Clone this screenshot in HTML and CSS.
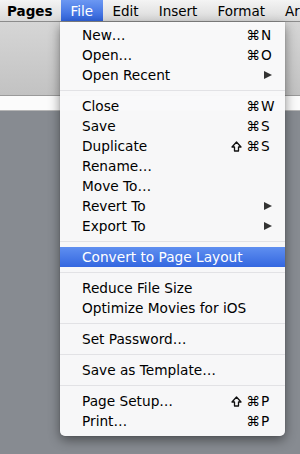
FILE: index.html
```html
<!DOCTYPE html>
<html>
<head>
    <title>Pages - File menu</title>
    <link rel="stylesheet" href="styles.css">
</head>
<body>
    <div class="menubar">
        <span class="app">Pages</span>
        <span class="active">File</span>
        <span>Edit</span>
        <span>Insert</span>
        <span>Format</span>
        <span>Arrange</span>
    </div>
    <div class="toolbar"></div>
    <div class="ruler"></div>
    <div class="canvas"></div>

    <div class="menu">
        <div class="item"><span>New…</span><span class="keys"><span class="mods">⌘</span><span class="key">N</span></span></div>
        <div class="item"><span>Open…</span><span class="keys"><span class="mods">⌘</span><span class="key">O</span></span></div>
        <div class="item"><span>Open Recent</span><span class="arrow"></span></div>
        <div class="sep"></div>
        <div class="item"><span>Close</span><span class="keys"><span class="mods">⌘</span><span class="key">W</span></span></div>
        <div class="item"><span>Save</span><span class="keys"><span class="mods">⌘</span><span class="key">S</span></span></div>
        <div class="item"><span>Duplicate</span><span class="keys"><span class="mods"><svg class="shift" width="11" height="11" viewBox="0 0 11 11"><path d="M5.5 1 L10 6 H7.5 V10 H3.5 V6 H1 Z"/></svg>⌘</span><span class="key">S</span></span></div>
        <div class="item"><span>Rename…</span></div>
        <div class="item"><span>Move To…</span></div>
        <div class="item"><span>Revert To</span><span class="arrow"></span></div>
        <div class="item"><span>Export To</span><span class="arrow"></span></div>
        <div class="sep"></div>
        <div class="item selected"><span>Convert to Page Layout</span></div>
        <div class="sep"></div>
        <div class="item"><span>Reduce File Size</span></div>
        <div class="item"><span>Optimize Movies for iOS</span></div>
        <div class="sep"></div>
        <div class="item"><span>Set Password…</span></div>
        <div class="sep"></div>
        <div class="item"><span>Save as Template…</span></div>
        <div class="sep"></div>
        <div class="item"><span>Page Setup…</span><span class="keys"><span class="mods"><svg class="shift" width="11" height="11" viewBox="0 0 11 11"><path d="M5.5 1 L10 6 H7.5 V10 H3.5 V6 H1 Z"/></svg>⌘</span><span class="key">P</span></span></div>
        <div class="item"><span>Print…</span><span class="keys"><span class="mods">⌘</span><span class="key">P</span></span></div>
    </div>
</body>
</html>
```

FILE: styles.css
```css
body {
    margin: 0;
    width: 300px;
    height: 454px;
    overflow: hidden;
    display: flex;
    flex-direction: column;
    font-family: "DejaVu Sans", "Liberation Sans", sans-serif;
    background-color: #878b91;
    position: relative;
}
.menubar {
    height: 21px;
    display: flex;
    align-items: stretch;
    white-space: nowrap;
    overflow: hidden;
    font-size: 13.5px;
    color: #000;
    background: linear-gradient(#f4f4f4, #d9d9d9);
    border-bottom: 1px solid #8c8c8c;
    flex-shrink: 0;
}
.menubar span {
    display: flex;
    align-items: center;
    padding: 0 10px;
}
.menubar .app {
    font-weight: bold;
    padding-left: 7px;
    padding-right: 8px;
}
.menubar .active {
    color: white;
    background: linear-gradient(#6c98f2, #2f62db);
    width: 42px;
    box-sizing: border-box;
}
.toolbar {
    height: 73px;
    background: linear-gradient(#d6d6d6, #c2c2c2);
    border-bottom: 1px solid #9a9a9a;
    flex-shrink: 0;
}
.ruler {
    height: 14px;
    background-color: #fbfbfb;
    border-bottom: 1px solid #b5b5b5;
    flex-shrink: 0;
}
.canvas {
    flex: 1;
    background-color: #878b91;
}
.menu {
    position: absolute;
    top: 22px;
    left: 60px;
    width: 225px;
    padding: 3px 0 5px;
    box-sizing: border-box;
    background-color: rgba(249, 249, 250, 0.98);
    border-radius: 0 0 5px 5px;
    box-shadow: 0 4px 12px rgba(0,0,0,0.45), 0 0 1px rgba(0,0,0,0.4);
    font-size: 13.7px;
    color: #000;
}
.item {
    height: 20px;
    display: flex;
    align-items: center;
    justify-content: space-between;
    padding: 0 12px 0 22px;
    white-space: nowrap;
}
.item.selected {
    color: white;
    background: linear-gradient(#5f8ff0, #3467e0);
}
.sep {
    height: 1px;
    margin: 5px 0;
    background-color: #e2e2e5;
}
.keys {
    display: flex;
}
.mods {
    display: flex;
    align-items: center;
    letter-spacing: 1px;
}
.shift {
    margin-right: 4px;
    fill: none;
    stroke: #111;
    stroke-width: 1.3;
    stroke-linejoin: round;
}
.key {
    width: 12px;
}
.arrow {
    width: 0;
    height: 0;
    margin-right: 1px;
    border-top: 4px solid transparent;
    border-bottom: 4px solid transparent;
    border-left: 8px solid #333;
}
```
